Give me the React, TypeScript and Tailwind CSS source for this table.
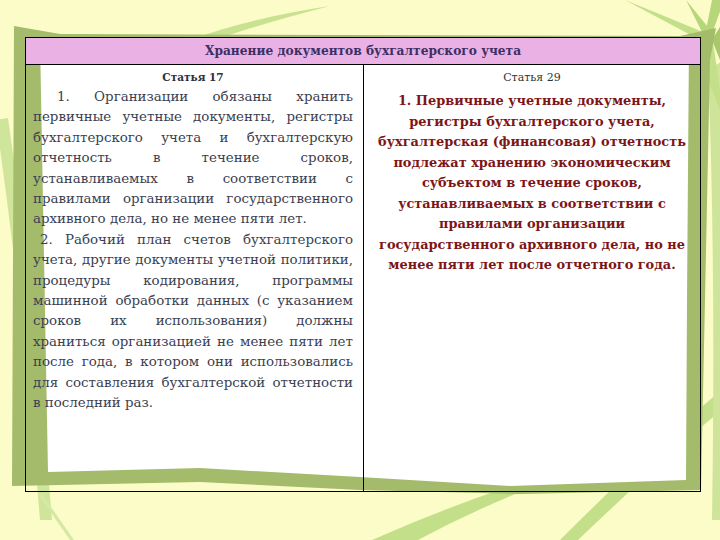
const leftP1 = [
  "1. Организации обязаны хранить",
  "первичные учетные документы, регистры",
  "бухгалтерского учета и бухгалтерскую",
  "отчетность в течение сроков,",
  "устанавливаемых в соответствии с",
  "правилами организации государственного",
];
const leftP1Last = "архивного дела, но не менее пяти лет.";

const leftP2 = [
  "2. Рабочий план счетов бухгалтерского",
  "учета, другие документы учетной политики,",
  "процедуры кодирования, программы",
  "машинной обработки данных (с указанием",
  "сроков их использования) должны",
  "храниться организацией не менее пяти лет",
  "после года, в котором они использовались",
  "для составления бухгалтерской отчетности",
];
const leftP2Last = "в последний раз.";

const rightLines = [
  "1. Первичные учетные документы,",
  "регистры бухгалтерского учета,",
  "бухгалтерская (финансовая) отчетность",
  "подлежат хранению экономическим",
  "субъектом в течение сроков,",
  "устанавливаемых в соответствии с",
  "правилами организации",
  "государственного архивного дела, но не",
  "менее пяти лет после отчетного года.",
];

const Backdrop = () => (
  <svg
    className="absolute inset-0"
    width="720"
    height="540"
    viewBox="0 0 720 540"
  >
    <rect width="720" height="540" fill="#fcfcc8" />
    {/* light green sweeps */}
    <path d="M-4 120 Q 22 300 40 520 L 52 520 Q 34 300 8 118 Z" fill="#cfe59a" />
    <path d="M38 494 L 70 540 L 74 540 L 42 494 Z" fill="#d6e8a6" />
    <path d="M190 40 Q 250 18 330 6 Q 260 24 215 40 Z" fill="#c9e291" />
    <path d="M505 488 Q 440 510 372 540 L 418 540 Q 470 512 530 488 Z" fill="#c4df8a" />
    <path d="M724 388 Q 650 450 560 540 L 578 540 Q 666 456 724 408 Z" fill="#c4df8a" />
    <path d="M708 70 Q 716 260 712 520 L 724 520 L 724 60 Z" fill="#cde49a" />
    {/* top-right star */}
    <path d="M625 0 L 708 34 L 700 40 Z" fill="#c4df8a" />
    <path d="M686 0 L 712 32 L 704 36 Z" fill="#b7d67a" />
    <path d="M724 0 L 712 34 L 706 30 L 712 0 Z" fill="#b7d67a" />
    <path d="M724 20 L 712 40 L 724 70 Z" fill="#a9c86c" />
    <path d="M700 60 L 712 34 L 724 120 Z" fill="#c4df8a" />
    {/* olive frame */}
    <path
      d="M14 26 L 60 34 L 680 36 L 716 28 L 710 60 L 701 490 L 520 494 L 360 490 L 200 482 L 12 486 Z"
      fill="#a4bb6c"
    />
    {/* white sheet */}
    <path
      d="M40 40 L 689 40 L 687 300 L 686 480 L 510 486 L 360 477 L 200 468 L 48 472 Z"
      fill="#ffffff"
    />
  </svg>
);

// one justified line: words spread edge to edge
const JustLine = ({ text, indent }: { text: string; indent?: string }) => (
  <div className={`flex justify-between gap-[3px] whitespace-nowrap ${indent ?? ""}`}>
    {text.split(" ").map((w, i) => (
      <span key={i}>{w}</span>
    ))}
  </div>
);

export default function App() {
  return (
    <div className="relative w-[720px] h-[540px] overflow-hidden font-['DejaVu_Serif',serif]">
      <Backdrop />
      <div className="relative pt-[37px] pl-[25px]">
        <div className="w-[676px] h-[455px] border border-black flex flex-col">
          <div className="h-[27px] shrink-0 bg-[#eab1e4] border-b border-black flex items-center justify-center text-[12.2px] font-bold text-[#3d2f63]">
            Хранение документов бухгалтерского учета
          </div>

          <div className="flex flex-1">
            <div className="w-[338px] border-r border-black pl-[7px] pr-[10px] pt-[3px]">
              <div className="text-center text-[10.5px] font-bold text-[#2c3040] leading-[19px]">
                Статья 17
              </div>
              <div className="text-[13.4px] leading-[20.4px] text-[#3a4050]">
                {leftP1.map((l, i) => (
                  <JustLine key={l} text={l} indent={i === 0 ? "pl-[24px]" : ""} />
                ))}
                <div>{leftP1Last}</div>
                {leftP2.map((l, i) => (
                  <JustLine key={l} text={l} indent={i === 0 ? "pl-[7px]" : ""} />
                ))}
                <div>{leftP2Last}</div>
              </div>
            </div>

            <div className="flex-1 pt-[2px] text-center">
              <div className="text-[11px] text-[#333333] leading-[22px]">
                Статья 29
              </div>
              <div className="pt-[2px] text-[12.9px] font-bold leading-[20.5px] text-[#7d1517]">
                {rightLines.map((l) => (
                  <div key={l}>{l}</div>
                ))}
              </div>
            </div>
          </div>
        </div>
      </div>
    </div>
  );
}
